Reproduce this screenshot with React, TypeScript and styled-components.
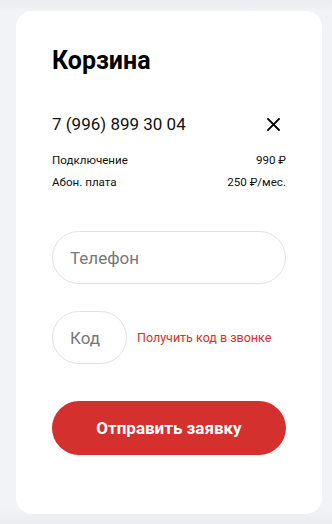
import React from "react";
import styled, { createGlobalStyle } from "styled-components";

const Global = createGlobalStyle`
  * { box-sizing: border-box; }
  html, body { margin: 0; padding: 0; }
  body {
    background: linear-gradient(#ebecf0 0px, #f2f3f7 12px, #f2f3f7 510px, #ebecf0 524px);
    font-family: Roboto, "Noto Sans", sans-serif;
    min-height: 524px;
  }
`;

const Page = styled.div`
  padding: 11px 10px 10px 16px;
`;

const Card = styled.div`
  background: #ffffff;
  border-radius: 16px;
  padding: 36px 36px 59px 36px;
  display: flex;
  flex-direction: column;
`;

const Title = styled.h1`
  margin: 0;
  font-size: 25px;
  font-weight: 700;
  color: #000;
  line-height: 28px;
`;

const PhoneRow = styled.div`
  margin-top: 37px;
  display: flex;
  justify-content: space-between;
  align-items: center;
  height: 24px;
`;

const Phone = styled.div`
  font-size: 17px;
  color: #111;
`;

const CloseBtn = styled.button`
  border: none;
  background: none;
  padding: 0;
  margin-right: 5px;
  width: 16px;
  height: 16px;
  display: flex;
  align-items: center;
  justify-content: center;
  cursor: pointer;
`;

const Details = styled.div`
  margin-top: 17px;
  display: flex;
  flex-direction: column;
  gap: 8px;
`;

const DetailRow = styled.div`
  display: flex;
  justify-content: space-between;
  font-size: 11.6px;
  line-height: 14px;
  color: #111;
`;

const Input = styled.input<{ $w?: string }>`
  width: ${(p) => p.$w || "100%"};
  height: 53px;
  border: 1px solid #e2e2e2;
  border-radius: 27px;
  padding: 0 17px;
  font-family: Roboto, "Noto Sans", sans-serif;
  font-size: 17px;
  color: #333;
  outline: none;
  background: #fff;
  &::placeholder { color: #777; }
`;

const PhoneInput = styled(Input)`
  margin-top: 42px;
`;

const CodeRow = styled.div`
  margin-top: 27px;
  display: flex;
  align-items: center;
  gap: 10px;
`;

const CodeLink = styled.a`
  color: #d8302c;
  font-size: 12.5px;
  text-decoration: none;
  cursor: pointer;
`;

const Submit = styled.button`
  margin-top: 37px;
  height: 54px;
  width: 100%;
  border: none;
  border-radius: 27px;
  background: #d4302d;
  color: #fff;
  font-family: Roboto, "Noto Sans", sans-serif;
  font-weight: 700;
  font-size: 17px;
  cursor: pointer;
`;

export default function App() {
  return (
    <>
      <Global />
      <Page>
        <Card>
          <Title>Корзина</Title>
          <PhoneRow>
            <Phone>7 (996) 899 30 04</Phone>
            <CloseBtn aria-label="Удалить">
              <svg width="13" height="13" viewBox="0 0 13 13">
                <path d="M1 1 L12 12 M12 1 L1 12" stroke="#000" strokeWidth="1.8" strokeLinecap="square" />
              </svg>
            </CloseBtn>
          </PhoneRow>
          <Details>
            <DetailRow>
              <span>Подключение</span>
              <span>990 ₽</span>
            </DetailRow>
            <DetailRow>
              <span>Абон. плата</span>
              <span>250 ₽/мес.</span>
            </DetailRow>
          </Details>
          <PhoneInput placeholder="Телефон" />
          <CodeRow>
            <Input $w="75px" placeholder="Код" />
            <CodeLink>Получить код в звонке</CodeLink>
          </CodeRow>
          <Submit>Отправить заявку</Submit>
        </Card>
      </Page>
    </>
  );
}
